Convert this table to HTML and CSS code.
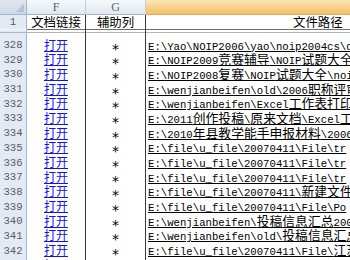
FILE: index.html
```html
<!DOCTYPE html>
<html lang="zh">
<head>
<meta charset="utf-8">
<link rel="stylesheet" href="styles.css">
</head>
<body>
<div class="sheet">
  <div class="row hdr">
    <div class="corner"><span class="tri"></span></div>
    <div class="colh">F</div>
    <div class="colh">G</div>
    <div class="colh sel"></div>
  </div>
  <div class="row r1">
    <div class="rh">1</div>
    <div class="c f">文档链接</div>
    <div class="c g">辅助列</div>
    <div class="c h"><span class="title">文件路径</span></div>
  </div>
  <div class="row freeze"><div class="rh"></div><div class="c"></div><div class="c"></div><div class="c h"></div></div>
  <div class="row d"><div class="rh">328</div><div class="c f"><span class="lnk">打开</span></div><div class="c g"><span class="ast">*</span></div><div class="c h"><span class="p">E:\Yao\NOIP2006\yao\noip2004cs\data\</span></div></div>
  <div class="row d"><div class="rh">329</div><div class="c f"><span class="lnk">打开</span></div><div class="c g"><span class="ast">*</span></div><div class="c h"><span class="p">E:\NOIP2009<span class="z">竞赛辅导</span>\NOIP<span class="z">试题大全</span>\no</span></div></div>
  <div class="row d"><div class="rh">330</div><div class="c f"><span class="lnk">打开</span></div><div class="c g"><span class="ast">*</span></div><div class="c h"><span class="p">E:\NOIP2008<span class="z">复赛</span>\NOIP<span class="z">试题大全</span>\noip</span></div></div>
  <div class="row d"><div class="rh">331</div><div class="c f"><span class="lnk">打开</span></div><div class="c g"><span class="ast">*</span></div><div class="c h"><span class="p">E:\wenjianbeifen\old\2006<span class="z">职称评审</span></span></div></div>
  <div class="row d"><div class="rh">332</div><div class="c f"><span class="lnk">打开</span></div><div class="c g"><span class="ast">*</span></div><div class="c h"><span class="p">E:\wenjianbeifen\Excel<span class="z">工作表打印</span></span></div></div>
  <div class="row d"><div class="rh">333</div><div class="c f"><span class="lnk">打开</span></div><div class="c g"><span class="ast">*</span></div><div class="c h"><span class="p">E:\2011<span class="z">创作投稿</span>\<span class="z">原来文档</span>\Excel<span class="z">工作</span></span></div></div>
  <div class="row d"><div class="rh">334</div><div class="c f"><span class="lnk">打开</span></div><div class="c g"><span class="ast">*</span></div><div class="c h"><span class="p">E:\2010<span class="z">年县教学能手申报材料</span>\2006\</span></div></div>
  <div class="row d"><div class="rh">335</div><div class="c f"><span class="lnk">打开</span></div><div class="c g"><span class="ast">*</span></div><div class="c h"><span class="p">E:\file\u_file\20070411\File\tr</span></div></div>
  <div class="row d"><div class="rh">336</div><div class="c f"><span class="lnk">打开</span></div><div class="c g"><span class="ast">*</span></div><div class="c h"><span class="p">E:\file\u_file\20070411\File\tr</span></div></div>
  <div class="row d"><div class="rh">337</div><div class="c f"><span class="lnk">打开</span></div><div class="c g"><span class="ast">*</span></div><div class="c h"><span class="p">E:\file\u_file\20070411\File\tr</span></div></div>
  <div class="row d"><div class="rh">338</div><div class="c f"><span class="lnk">打开</span></div><div class="c g"><span class="ast">*</span></div><div class="c h"><span class="p">E:\file\u_file\20070411\<span class="z">新建文件夹</span></span></div></div>
  <div class="row d"><div class="rh">339</div><div class="c f"><span class="lnk">打开</span></div><div class="c g"><span class="ast">*</span></div><div class="c h"><span class="p">E:\file\u_file\20070411\File\Po</span></div></div>
  <div class="row d"><div class="rh">340</div><div class="c f"><span class="lnk">打开</span></div><div class="c g"><span class="ast">*</span></div><div class="c h"><span class="p">E:\wenjianbeifen\<span class="z">投稿信息汇总</span>2006</span></div></div>
  <div class="row d"><div class="rh">341</div><div class="c f"><span class="lnk">打开</span></div><div class="c g"><span class="ast">*</span></div><div class="c h"><span class="p">E:\wenjianbeifen\old\<span class="z">投稿信息汇总</span></span></div></div>
  <div class="row d"><div class="rh">342</div><div class="c f"><span class="lnk">打开</span></div><div class="c g"><span class="ast">*</span></div><div class="c h"><span class="p">E:\file\u_file\20070411\File\<span class="z">江苏</span></span></div></div>
  <div class="row d"><div class="rh">343</div><div class="c f"><span class="lnk">打开</span></div><div class="c g"><span class="ast">*</span></div><div class="c h"><span class="p">E:\file\u_file\20070411\File\tr</span></div></div>
</div>
</body>
</html>
```

FILE: styles.css
```css
* { box-sizing: border-box; }
html, body { margin: 0; padding: 0; background: #fff; overflow: hidden; }
body { width: 350px; height: 260px; }
.sheet {
  width: 350px;
  height: 260px;
  overflow: hidden;
  font-family: "Noto Sans CJK SC", sans-serif;
  color: #000;
}
.row {
  display: grid;
  grid-template-columns: 27px 59px 60px 1fr;
  white-space: nowrap;
}
.hdr { height: 15px; }
.corner {
  position: relative;
  background: linear-gradient(#dfe6ef, #cfd9e6);
  border-right: 1px solid #9eb6ce;
  border-bottom: 1px solid #9eb6ce;
}
.tri {
  position: absolute;
  right: 2px;
  bottom: 2px;
  width: 0;
  height: 0;
  border-left: 8px solid transparent;
  border-bottom: 8px solid #b3c1d3;
}
.colh {
  background: linear-gradient(#f6f8fb, #e2e8f0);
  border-right: 1px solid #c4cfdc;
  border-bottom: 1px solid #9eb6ce;
  text-align: center;
  font-family: "Liberation Serif", serif;
  font-size: 12px;
  line-height: 14px;
  color: #5a6577;
}
.colh.sel {
  background: linear-gradient(#fbe6bd, #f7cd84 60%, #f5c06a);
  border-right: 0;
  border-bottom: 1px solid #e0a85a;
}
.r1 { height: 15px; border-bottom: 1px solid #6f6f6f; }
.freeze { height: 6px; }
.freeze .c { background: linear-gradient(#fff 0 2px, #b4b4b4 2px 3px, #fff 3px); }
.freeze .rh { border-bottom: 0; background: linear-gradient(#e3eaf4 0 2px, #a9b9cc 2px 3px, #e3eaf4 3px); }
.d { height: 14.7px; }
.rh {
  background: #e3eaf4;
  border-right: 1px solid #9eb6ce;
  border-bottom: 1px solid #f3f6fb;
  text-align: center;
  font-family: "Liberation Mono", monospace;
  font-size: 10.6px;
  line-height: 14px;
  color: #555c66;
}
.d .rh { padding-top: 2px; }
.c {
  border-right: 1px solid #3a3a3a;
  font-size: 12px;
  line-height: 14px;
}
.d .c { padding-top: 1.5px; }
.f, .g { text-align: center; }
.h { border-right: 0; overflow: hidden; }
.r1 .c { font-size: 12.4px; line-height: 14px; }
.r1 .h { text-align: left; }
.title { margin-left: 147px; }
.lnk { color: #1010f0; text-decoration: underline; font-size: 12px; line-height: 14px; }
.ast {
  font-family: "DejaVu Sans", sans-serif;
  font-size: 14px;
  line-height: 14px;
  vertical-align: -4px;
}
.p {
  display: inline-block;
  padding-left: 2px;
  font-family: "Liberation Mono", monospace;
  font-size: 10.67px;
  line-height: 14px;
  text-decoration: underline;
}
.z { font-family: "Noto Sans CJK SC", sans-serif; font-size: 12.8px; line-height: 14px; }
```
